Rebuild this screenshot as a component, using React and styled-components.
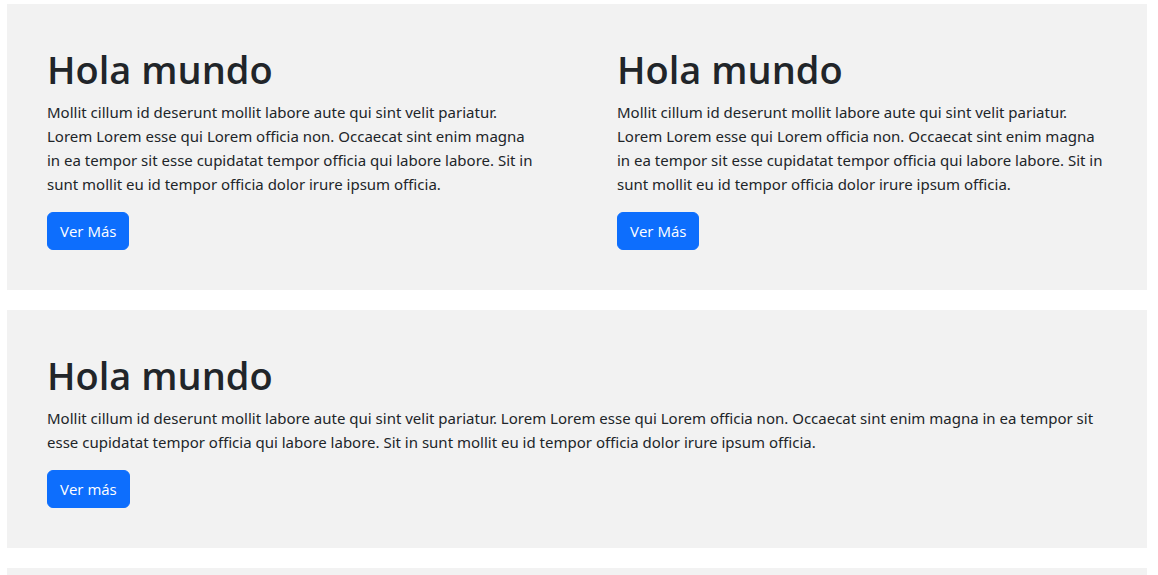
import React from 'react';
import styled, { createGlobalStyle } from 'styled-components';

const GlobalStyle = createGlobalStyle`
  *, *::before, *::after { box-sizing: border-box; }
  body {
    margin: 0;
    background: #fff;
    color: #212529;
    font-family: "Open Sans", "Noto Sans", sans-serif;
    font-size: 15px;
    line-height: 24px;
  }
`;

const Page = styled.main`
  display: flex;
  flex-direction: column;
  gap: 20px;
  min-height: 100vh;
  padding: 4px 11px 0 7px;
`;

const Banner = styled.section`
  display: grid;
  grid-template-columns: repeat(${(p) => p.$columns}, minmax(0, 1fr));
  background: #f2f2f2;
`;

const EmptyBanner = styled.div`
  flex: 1;
  background: #f2f2f2;
`;

const Card = styled.article`
  padding: 40px;
`;

const Title = styled.h1`
  margin: 0 0 6px;
  font-size: 38px;
  line-height: 50px;
  font-weight: 600;
`;

const Text = styled.p`
  margin: 0 0 16px;
  font-family: "Noto Sans", "Open Sans", sans-serif;
`;

const Button = styled.button`
  padding: 6px 12px;
  border: 1px solid #0d6efd;
  border-radius: 6px;
  background: #0d6efd;
  color: #fff;
  font: inherit;
  cursor: pointer;
`;

const copy =
  'Mollit cillum id deserunt mollit labore aute qui sint velit pariatur. Lorem Lorem esse qui Lorem officia non. Occaecat sint enim magna in ea tempor sit esse cupidatat tempor officia qui labore labore. Sit in sunt mollit eu id tempor officia dolor irure ipsum officia.';

function Intro({ action }) {
  return (
    <Card>
      <Title>Hola mundo</Title>
      <Text>{copy}</Text>
      <Button type="button">{action}</Button>
    </Card>
  );
}

export default function App() {
  return (
    <>
      <GlobalStyle />
      <Page>
        <Banner $columns={2}>
          <Intro action="Ver Más" />
          <Intro action="Ver Más" />
        </Banner>
        <Banner $columns={1}>
          <Intro action="Ver más" />
        </Banner>
        <EmptyBanner />
      </Page>
    </>
  );
}
